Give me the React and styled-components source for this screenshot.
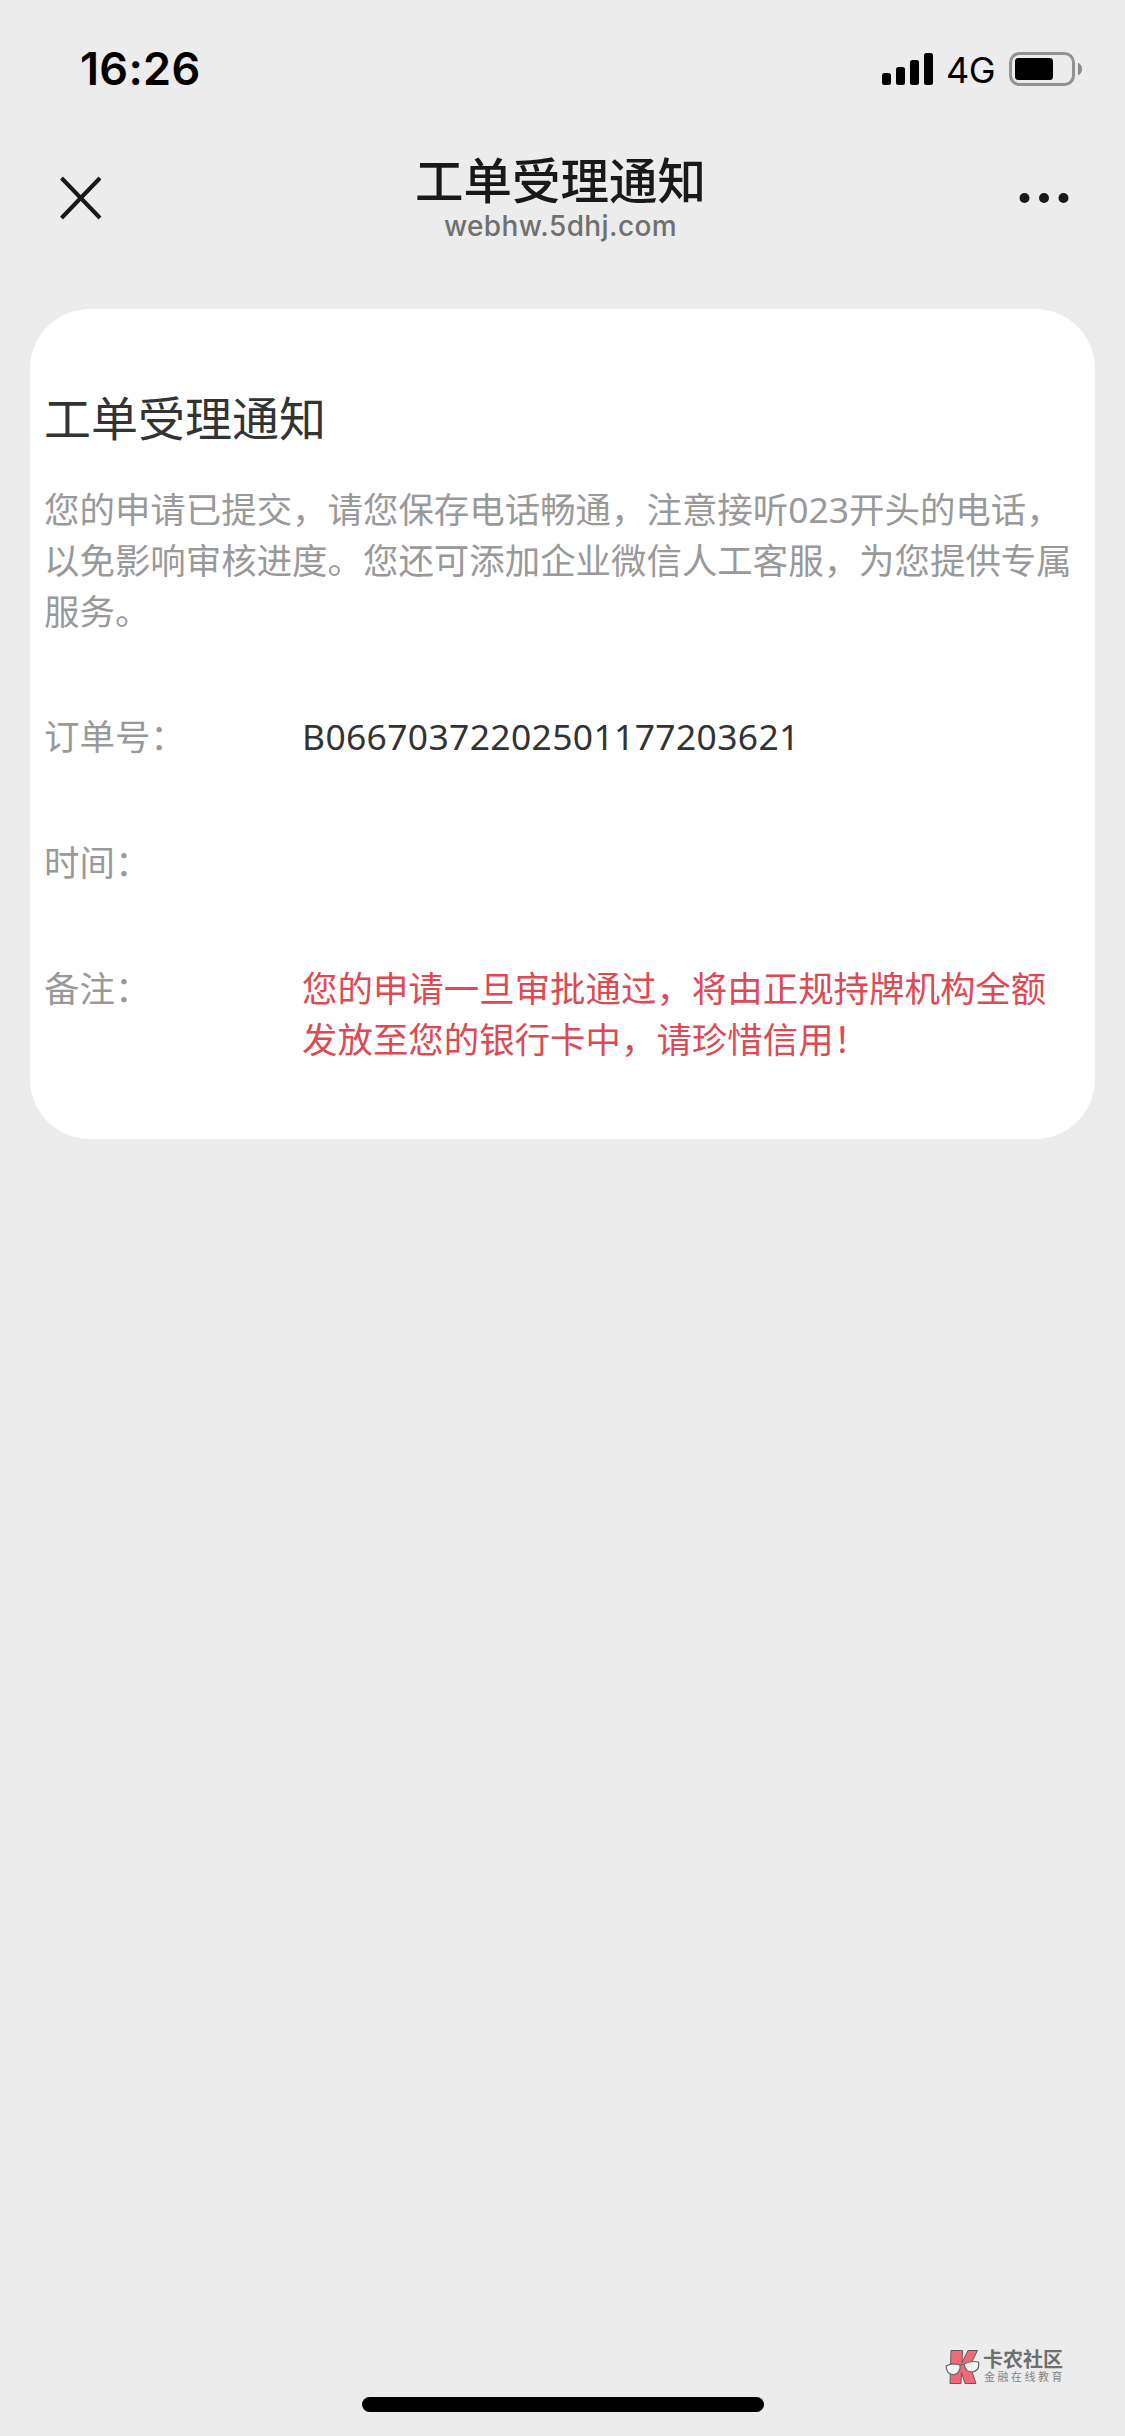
import React from 'react';
import styled, { createGlobalStyle } from 'styled-components';

const details = [
	{ label: '订单号：', lines: ['B06670372202501177203621'], code: true },
	{ label: '时间：', lines: [] },
	{
		label: '备注：',
		lines: ['您的申请一旦审批通过，将由正规持牌机构全额', '发放至您的银行卡中，请珍惜信用！'],
		danger: true,
	},
];

const intro = [
	'您的申请已提交，请您保存电话畅通，注意接听023开头的电话，',
	'以免影响审核进度。您还可添加企业微信人工客服，为您提供专属',
	'服务。',
];

const App = () => {
	return (
		<Page>
			<GlobalStyle />
			<StatusBar>
				<Clock>16:26</Clock>
				<StatusIcons>
					<svg width="51" height="32" viewBox="0 0 51 32">
						<rect x="0" y="20" width="9" height="12" rx="2.5" />
						<rect x="14" y="14" width="9" height="18" rx="2.5" />
						<rect x="28" y="7" width="9" height="25" rx="2.5" />
						<rect x="42" y="0" width="9" height="32" rx="2.5" />
					</svg>
					<Network>4G</Network>
					<svg width="73" height="34" viewBox="0 0 73 34">
						<rect x="1.5" y="1.5" width="63" height="31" rx="9" fill="none" stroke="#929292" strokeWidth="3" />
						<rect x="6" y="6" width="38" height="22" rx="3.5" />
						<path d="M69 10.7c2.6 1 4 3.5 4 6.300s-1.400 5.300-4 6.300z" fill="#8a8a8a" />
					</svg>
				</StatusIcons>
			</StatusBar>

			<NavBar>
				<svg width="42" height="44" viewBox="0 0 42 44">
					<path d="M1.500 2L40 42M40 2L1.500 42" stroke="#191919" strokeWidth="4" />
				</svg>
				<Heading>
					<h1>工单受理通知</h1>
					<p>webhw.5dhj.com</p>
				</Heading>
				<svg width="50" height="12" viewBox="0 0 50 12" fill="#191919">
					<circle cx="5.500" cy="6" r="5" />
					<circle cx="25" cy="6" r="5" />
					<circle cx="44.500" cy="6" r="5" />
				</svg>
			</NavBar>

			<Card>
				<h2>工单受理通知</h2>
				<Intro>
					{intro.map((line) => (
						<Line key={line}>{line}</Line>
					))}
				</Intro>
				<Details>
					{details.map((item) => (
						<Row key={item.label}>
							<Label>{item.label}</Label>
							<Value $danger={item.danger} $code={item.code}>
								{item.lines.map((line) => (
									<Line key={line}>{line}</Line>
								))}
							</Value>
						</Row>
					))}
				</Details>
			</Card>

			<Footer>
				<Brand>
					<svg width="35" height="36" viewBox="0 0 35 36">
						<g fill="#ee6a76" stroke="#6b5a5c" strokeWidth="1">
							<path d="M6 1.500h11.500l-.5 12 6-12h9.500l-7.500 15 6 18H20l-3.500-11-.5 11H5z" />
						</g>
						<g fill="#f3f3f3" stroke="#66686a" strokeWidth="1.200">
							<path d="M1 17c4-2 10-2.500 14-1 .8 5-1.500 9-6 9.500C4 26 1.500 22 1 17z" />
							<path d="M19 15c4-2 10-3 14.500-2 .8 5-1 9-5.500 9.800C23 23.500 20 20 19 15z" />
							<path d="M15 16l4-1" />
						</g>
					</svg>
					<div>
						<BrandName>卡农社区</BrandName>
						<BrandSlogan>金融在线教育</BrandSlogan>
					</div>
				</Brand>
				<HomeIndicator />
			</Footer>
		</Page>
	);
};

const GlobalStyle = createGlobalStyle`
	* {
		box-sizing: border-box;
	}

	body {
		margin: 0;
		background: #ececec;
	}

	h1, h2, p {
		margin: 0;
		font-weight: 400;
	}

	svg {
		display: block;
		flex-shrink: 0;
	}
`;

const Page = styled.div`
	display: flex;
	flex-direction: column;
	width: 1125px;
	height: 2436px;
	background: #ececec;
	font-family: 'Noto Sans', 'Noto Sans CJK SC', sans-serif;
`;

const StatusBar = styled.div`
	display: flex;
	justify-content: space-between;
	height: 132px;
	padding: 42px 43px 0 80px;
`;

const Clock = styled.div`
	height: 54px;
	font: 600 45px/54px Inter, sans-serif;
	letter-spacing: 0.3px;
	color: #000;
`;

const StatusIcons = styled.div`
	display: flex;
	align-items: center;
	height: 54px;
`;

const Network = styled.div`
	width: 76px;
	padding: 2px 0 0 13px;
	font: 400 36px/54px Inter, sans-serif;
	letter-spacing: -0.5px;
`;

const NavBar = styled.div`
	display: flex;
	align-items: center;
	justify-content: space-between;
	height: 132px;
	padding: 0 56px 0 60px;
`;

const Heading = styled.div`
	padding-bottom: 3px;
	text-align: center;

	h1 {
		font-size: 48.500px;
		font-weight: 500;
		line-height: 56px;
		color: #191919;
	}

	p {
		margin-top: 2px;
		font: 500 28px/32px Inter, sans-serif;
		letter-spacing: 0.4px;
		color: #707070;
	}
`;

const Card = styled.div`
	margin: 45px 30px 0;
	padding: 79px 15px 74px 14px;
	border-radius: 60px;
	background: #fff;

	h2 {
		font-size: 47px;
		line-height: 60px;
		color: #333;
	}
`;

const Intro = styled.div`
	margin-top: 36px;
	color: #999;
`;

const Line = styled.div`
	font-size: 35.450px;
	line-height: 51px;
	white-space: nowrap;
`;

const Details = styled.div`
	display: flex;
	flex-direction: column;
	gap: 75px;
	margin-top: 74px;
`;

const Row = styled.div`
	display: flex;
	min-height: 51px;
`;

const Label = styled.div`
	width: 258px;
	font-size: 35.450px;
	line-height: 51px;
	color: #999;
`;

const Value = styled.div`
	color: ${(props) => (props.$danger ? '#dd4a54' : '#333')};
	letter-spacing: ${(props) => (props.$code ? '0.35px' : 'normal')};
`;

const Footer = styled.div`
	display: flex;
	flex-direction: column;
	align-items: center;
	margin-top: auto;
	padding-bottom: 24px;
`;

const Brand = styled.div`
	display: flex;
	align-self: flex-end;
	gap: 3px;
	margin: 0 60px 12px 0;
`;

const BrandName = styled.div`
	font-size: 20px;
	font-weight: 700;
	line-height: 22px;
	color: #6e6e6e;
`;

const BrandSlogan = styled.div`
	padding-left: 1px;
	font-size: 11px;
	line-height: 12px;
	letter-spacing: 2.500px;
	color: #858585;
`;

const HomeIndicator = styled.div`
	width: 402px;
	height: 15px;
	border-radius: 8px;
	background: #000;
`;

export default App;
